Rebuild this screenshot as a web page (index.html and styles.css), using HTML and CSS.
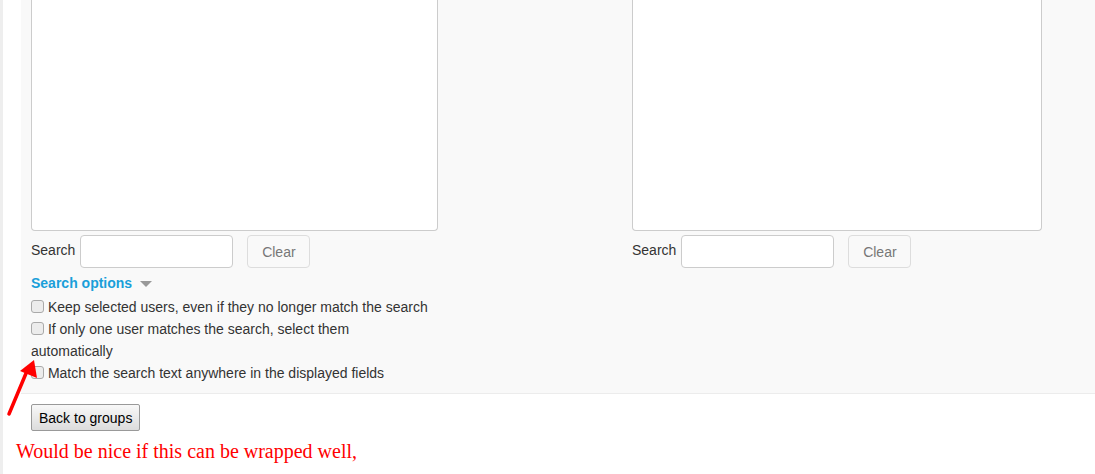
FILE: index.html
```html
<!DOCTYPE html>
<html lang="en">
<head>
    <meta charset="UTF-8">
    <meta name="viewport" content="width=device-width, initial-scale=1.0">
    <title>Group members</title>
    <link rel="stylesheet" href="styles.css">
</head>
<body>
    <div class="page">
        <div class="panel">
            <div class="selectors">
                <div class="selector">
                    <div class="listbox"></div>
                    <div class="search-row">
                        <label for="removeSearch">Search</label>
                        <input type="text" id="removeSearch">
                        <button class="clear-btn">Clear</button>
                    </div>
                    <a class="options-toggle" href="#">Search options <span class="caret"></span></a>
                    <div class="options">
                        <label class="option"><span class="check"></span> Keep selected users, even if they no longer match the search</label>
                        <label class="option"><span class="check"></span> If only one user matches the search, select them automatically</label>
                        <label class="option"><span class="check"></span> Match the search text anywhere in the displayed fields</label>
                    </div>
                </div>
                <div class="selector">
                    <div class="listbox"></div>
                    <div class="search-row">
                        <label for="addSearch">Search</label>
                        <input type="text" id="addSearch">
                        <button class="clear-btn">Clear</button>
                    </div>
                </div>
            </div>
        </div>
        <div class="actions">
            <button class="back-btn">Back to groups</button>
        </div>
        <p class="note">Would be nice if this can be wrapped well,</p>

        <svg class="arrow" width="40" height="64" viewBox="0 0 40 64">
            <line x1="6" y1="56" x2="24" y2="13" stroke="#ff0000" stroke-width="3.5" stroke-linecap="round"/>
            <polygon points="31,2 34,20 17,13" fill="#ff0000"/>
        </svg>
    </div>
</body>
</html>
```

FILE: styles.css
```css
body {
    margin: 0;
    font-family: "Liberation Sans", Arial, sans-serif;
    font-size: 14px;
    color: #333;
    background: #fff;
}
.page {
    position: relative;
    min-height: 474px;
    border-left: 3px solid #eeeeee;
    padding-left: 18px;
}
.panel {
    background: #f9f9f9;
    border-bottom: 1px solid #ececec;
    padding: 0 0 9px 10px;
}
.selectors {
    display: grid;
    grid-template-columns: 407px 410px;
    column-gap: 194px;
}
.listbox {
    height: 230px;
    background: #fff;
    border: 1px solid #ccc;
    border-top: none;
    border-radius: 0 0 4px 4px;
}
.search-row {
    display: flex;
    align-items: center;
    margin-top: 4px;
    height: 33px;
}
.search-row label {
    margin-right: 5px;
    margin-top: -3px;
}
.search-row input {
    width: 153px;
    height: 33px;
    box-sizing: border-box;
    border: 1px solid #ccc;
    border-radius: 4px;
    background: #fff;
}
.clear-btn {
    margin-left: 14px;
    width: 63px;
    height: 33px;
    border: 1px solid #ddd;
    border-radius: 4px;
    background: #f9f9f9;
    color: #777;
    font-family: inherit;
    font-size: 14px;
}
.options-toggle {
    display: block;
    margin-top: 4px;
    line-height: 22px;
    color: #1a9fd9;
    font-weight: bold;
    text-decoration: none;
}
.caret {
    display: inline-block;
    margin-left: 4px;
    vertical-align: middle;
    border-left: 6px solid transparent;
    border-right: 6px solid transparent;
    border-top: 6px solid #999;
}
.options {
    width: 400px;
    margin-top: 2px;
}
.option {
    display: block;
    line-height: 22px;
}
.check {
    display: inline-block;
    width: 11px;
    height: 11px;
    border: 1px solid #aaa;
    border-radius: 3px;
    background: #ececec;
    vertical-align: -1px;
}
.actions {
    padding: 10px 0 0 10px;
}
.back-btn {
    height: 27px;
    padding: 0 7px;
    font-family: "Liberation Sans", Arial, sans-serif;
    font-size: 14px;
    color: #000;
    border: 1px solid #999;
    border-radius: 2px;
    background: linear-gradient(#f8f8f8, #dcdcdc);
}
.note {
    margin: 9px 0 0 -5px;
    font-family: "Liberation Serif", "Times New Roman", serif;
    font-size: 20px;
    color: #ff0000;
}
.arrow {
    position: absolute;
    left: 0;
    top: 358px;
}
```
